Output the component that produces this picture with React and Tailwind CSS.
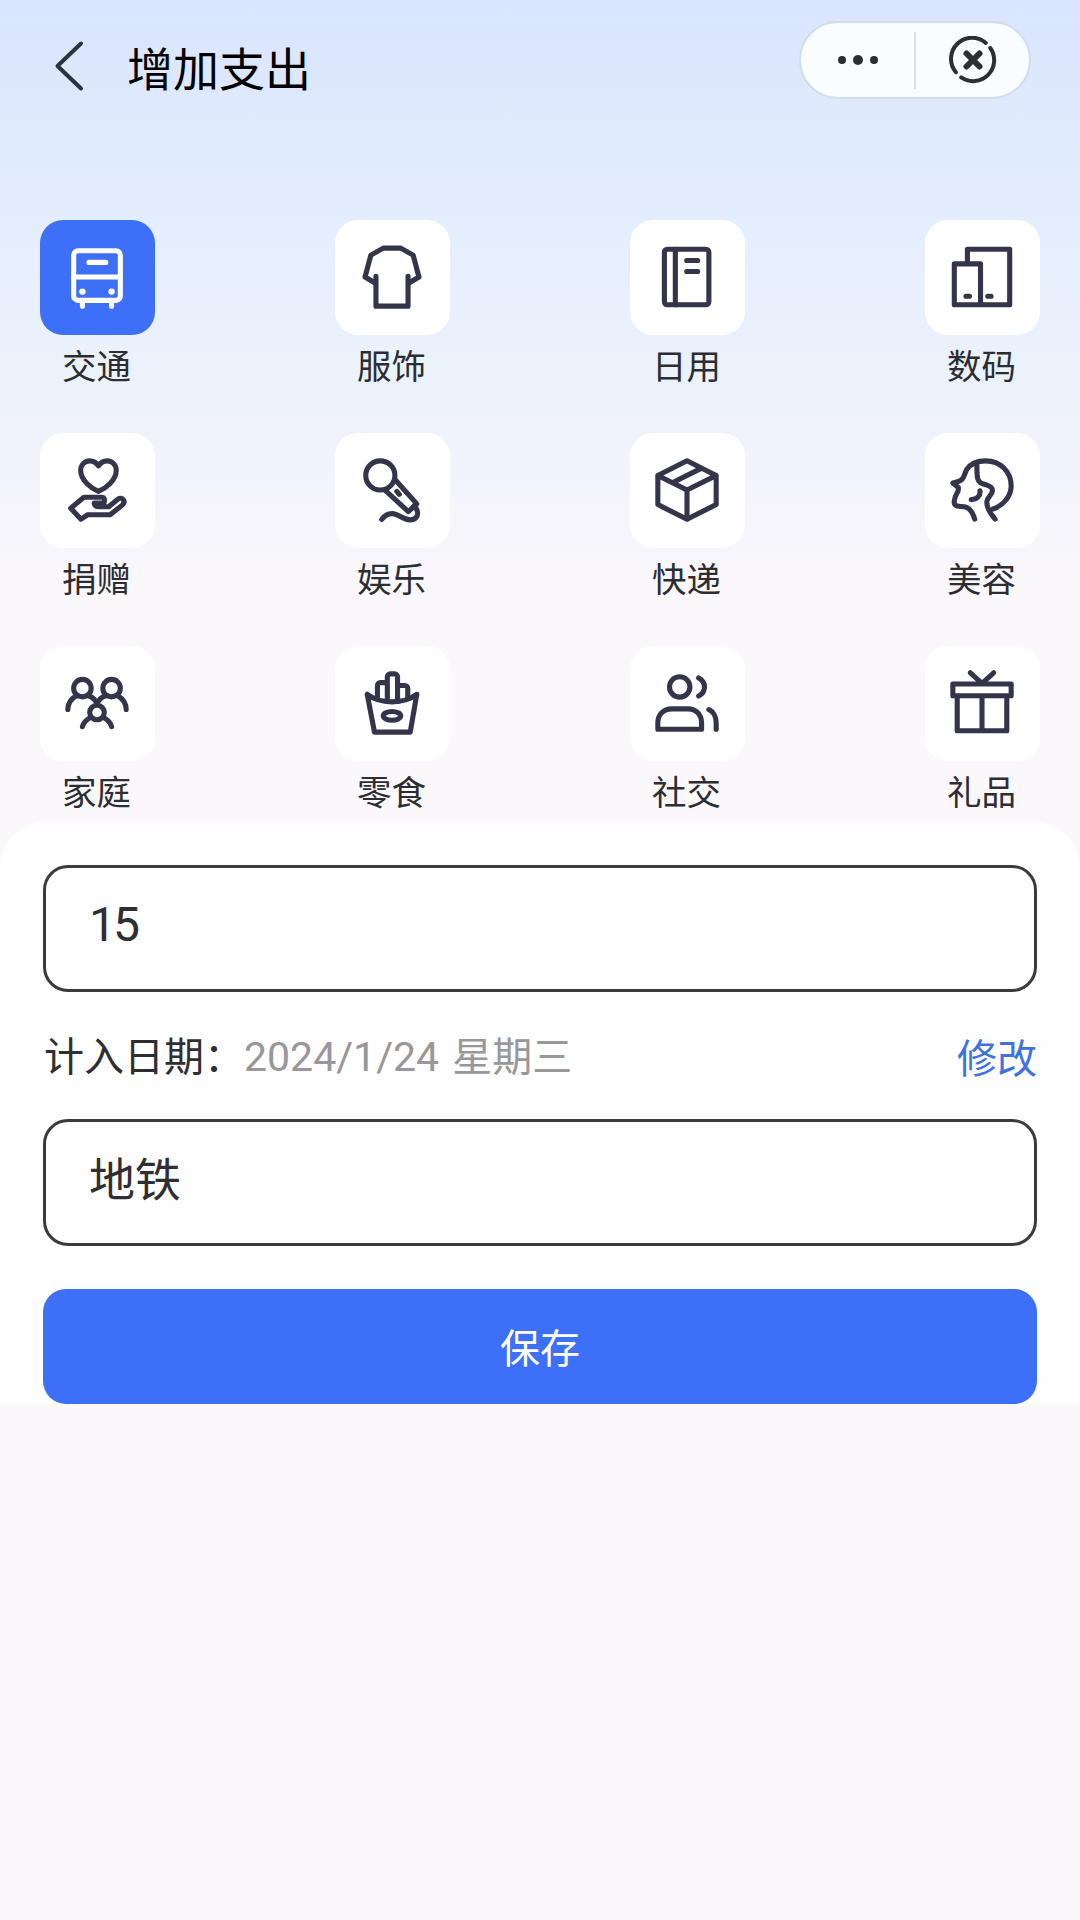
import React, { useState } from "react";
import clsx from "clsx";

const categories = [
  {
    name: "交通",
    icon: (
      <>
        <rect x="8" y="6" width="32" height="34" rx="3" />
        <path d="M8 24h32M18.500 14h11.500M14 40v4M34 40v4" />
        <circle cx="14" cy="34" r="2.200" fill="currentColor" stroke="none" />
        <circle cx="34" cy="34" r="2.200" fill="currentColor" stroke="none" />
      </>
    ),
  },
  {
    name: "服饰",
    icon: (
      <path d="M13 23.500V44h22V23.500M13 28.500 5.500 24 9.500 9 18 4.200h12L38.500 9l4 15-7.500 4.500" />
    ),
  },
  {
    name: "日用",
    icon: (
      <>
        <rect x="8.500" y="5" width="30.500" height="38" rx="2" />
        <path d="M16 5v38M23.800 12.700h7.500M23.800 20.200h7.500" />
      </>
    ),
  },
  {
    name: "数码",
    icon: (
      <path d="M14 15V5h29v38H23M5 15h18v28H5zM13 37.200h2.400M28 37.200h2.200" />
    ),
  },
  {
    name: "捐赠",
    icon: (
      <>
        <path d="M31 4c3.500 0 6.200 2.900 6.200 6.600C37.200 17.500 29.500 23.300 25 25c-4.500-1.700-12.200-7.500-12.200-14.400C12.800 6.900 15.500 4 19 4c2.500 0 4.700 1.400 6 3.500C26.300 5.400 28.500 4 31 4z" />
        <path d="M13 44 6 36.500 15 29h12.200c1.800 0 2.500 1.700 1.500 3.800L22 33c.3 1.500 1.700 2.500 3.500 2.500H32l6.500-5.300c1.200-.9 2.700-.7 3.500.4.900 1.200.7 2.500-.5 3.600L33 41H17.500L13 44z" />
      </>
    ),
  },
  {
    name: "娱乐",
    icon: (
      <>
        <circle cx="16" cy="14" r="10" />
        <path d="M26.200 17 41 33.500 35.200 38.800 18.800 23.800M27.300 25l1.700 2" />
        <path d="M17 44.200c2-3 4.200-4.200 7.500-4 4.500.3 6.500 4.300 12 4.300 3.500 0 5.500-2.500 5-5.300-.3-1.800-1-3.200-2.500-4.200" />
      </>
    ),
  },
  {
    name: "快递",
    icon: (
      <path d="M44 14 24 4 4 14v20l20 10 20-10V14zM4 14l20 10M24 44V24M44 14 24 24M34 9 14 19" />
    ),
  },
  {
    name: "美容",
    icon: (
      <>
        <path d="M19 44c-1-3.500-2.800-7-6-8.200-2-.8-4-.3-6-.8-1.500-.4-2.300-1.600-2-3.500.3-2 .7-3.500 1.800-5.200.8-1.200 1.200-2.200 1-4L4 19.200c3-.6 5-1 6.500-2.700 1.500-1.800 1.600-4 3-6.500C16 6 20.500 4 26.500 4 36.500 4 44 11.500 44 21c0 7-5 13.500-12.500 16" />
        <path d="M20.500 5.500c0 4-.2 7 .5 10.500.7 3.300 3 3.600 6 4.500 2.700.9 4.300 2 4.200 4-.2 3-3.700 4.500-3.900 7.500-.2 4.500 2.700 8.500 5.700 12M22.600 24.600c.4 3.400-2 5.900-6 6" />
      </>
    ),
  },
  {
    name: "家庭",
    icon: (
      <>
        <circle cx="14" cy="13.800" r="6" />
        <circle cx="34" cy="13.800" r="6" />
        <circle cx="24" cy="30.500" r="5" />
        <path d="M4 28.500c0-4 2-7.300 5.800-9.500M18 19c3 1 5 2.800 6 5.500 1-2.700 3-4.500 6-5.500M44 28.500c0-4-2-7.300-5.800-9.500M14 40.200c.8-2.700 2.700-4.700 5.500-6.200M34 40.200c-.8-2.700-2.700-4.700-5.500-6.200" />
      </>
    ),
  },
  {
    name: "零食",
    icon: (
      <>
        <path d="M7 18l5 26h24.500L41 18c-4.500 3.500-10.500 5.200-17 5.200S11.500 21.500 7 18z" />
        <path d="M14 20v-8a2 2 0 0 1 2-2h4.500M20.800 23V6a2 2 0 0 1 2-2h3a2 2 0 0 1 2 2v17M28 12h4.800a2 2 0 0 1 2 2v6.500" />
        <ellipse cx="24" cy="32.800" rx="6" ry="3" />
      </>
    ),
  },
  {
    name: "社交",
    icon: (
      <>
        <circle cx="19" cy="13" r="7" />
        <path d="M32 6.800c2.400 1.300 4 3.500 4 6.200s-1.600 4.900-4 6.200M39 28.500c3 1.300 5 5 5 9V42" />
        <path d="M4 42v-4.500C4 32 7.800 28 13.500 28h11.200c5.500 0 9.300 4 9.300 9.500V42H4z" />
      </>
    ),
  },
  {
    name: "礼品",
    icon: (
      <path d="M4 11h40v8H4zM7 19h34v24H7zM24 19v24M16 3.300l8 7.200 8-7.200" />
    ),
  },
];

function CategoryItem({ item, active, onClick }) {
  return (
    <button onClick={onClick} className="flex flex-col items-center cursor-pointer">
      <span
        className={clsx(
          "flex w-[115px] h-[115px] items-center justify-center rounded-[23px] pr-px pb-px",
          active ? "bg-[#3d6ff7] text-white" : "bg-white text-[#34354a]"
        )}
      >
        <svg
          viewBox="0 0 48 48"
          className="w-[70px] h-[70px]"
          fill="none"
          stroke="currentColor"
          strokeWidth="3.500"
          strokeLinecap="round"
          strokeLinejoin="round"
        >
          {item.icon}
        </svg>
      </span>
      <span className="mt-1 mb-0.5 pr-0.5 text-[34.500px] leading-[50px] text-[#2c2d33]">
        {item.name}
      </span>
    </button>
  );
}

function Header() {
  return (
    <header className="flex items-start justify-between pl-[54px] pr-[49px] pt-[21px]">
      <div className="flex items-center h-[89px] gap-[42px]">
        <svg
          viewBox="0 0 31 52"
          className="w-[31px] h-[52px]"
          fill="none"
          stroke="#2b333d"
          strokeWidth="4"
          strokeLinecap="round"
          strokeLinejoin="round"
        >
          <path d="M27 3.500 3.500 26 27 48.500" />
        </svg>
        <h1 className="text-[46px] leading-[60px] text-black">增加支出</h1>
      </div>

      <div className="flex items-center w-[232px] h-[78px] rounded-full bg-[#fafdff] border-2 border-[#d3dde9]">
        <div className="flex flex-1 items-center justify-center gap-[7px]">
          <span className="w-2 h-2 rounded-full bg-[#2b2e33]" />
          <span className="w-2.5 h-2.5 rounded-full bg-[#2b2e33]" />
          <span className="w-2 h-2 rounded-full bg-[#2b2e33]" />
        </div>
        <span className="w-0.5 h-[57px] bg-[#dcdfe4]" />
        <div className="flex flex-1 items-center justify-center">
          <svg
            viewBox="0 0 48 48"
            className="w-12 h-12"
            fill="none"
            stroke="#2b2e33"
            strokeLinecap="round"
          >
            <path
              d="M36.800 6.900A21 21 0 0 0 6.900 36.200M12.200 41.400A21 21 0 0 0 41.300 12"
              strokeWidth="4"
            />
            <path d="M17.500 17.500l13 13M30.500 17.500l-13 13" strokeWidth="6" />
          </svg>
        </div>
      </div>
    </header>
  );
}

export default function App() {
  const [selected, setSelected] = useState("交通");
  const [amount, setAmount] = useState("15");
  const [note, setNote] = useState("地铁");

  return (
    <div className="w-[1080px] min-h-[1920px] bg-[#faf8fb] font-['Noto_Sans_CJK_SC',sans-serif]">
      <div className="bg-[linear-gradient(180deg,#dae5ff_0px,#dfeafc_130px,#e5eefe_230px,#ebf2fb_370px,#f3f3fc_470px,#faf8fb_590px)]">
        <Header />

        <div className="grid grid-cols-[repeat(4,115px)] justify-between gap-y-[42px] px-10 pt-[110px]">
          {categories.map((item) => (
            <CategoryItem
              key={item.name}
              item={item}
              active={item.name === selected}
              onClick={() => setSelected(item.name)}
            />
          ))}
        </div>

        <div className="mt-[5px] rounded-t-[46px] bg-[#fefefe] px-[43px] pt-[43px]">
          <input
            value={amount}
            onChange={(e) => setAmount(e.target.value)}
            className="block w-full h-[127px] rounded-[25px] border-3 border-[#3b3a3d] px-[43px] pb-2 font-['Roboto','Noto_Sans_CJK_SC',sans-serif] text-[48px] tracking-[-3px] text-[#2f2e32] outline-none"
          />

          <div className="flex h-[127px] items-center justify-between text-[40px] leading-[60px]">
            <p className="flex items-baseline pl-px text-[#2f2e32]">
              <span>计入日期：</span>
              <span className="flex items-baseline gap-[13px] text-[#98979a]">
                <span className="font-['Roboto',sans-serif] text-[41px]">2024/1/24</span>
                <span>星期三</span>
              </span>
            </p>
            <button className="text-[#3f72e0] cursor-pointer">修改</button>
          </div>

          <input
            value={note}
            onChange={(e) => setNote(e.target.value)}
            className="block w-full h-[127px] rounded-[25px] border-3 border-[#3b3a3d] px-[43px] pb-3.5 text-[46px] text-[#2f2e32] outline-none"
          />

          <button className="mt-[43px] block w-full h-[115px] rounded-[23px] bg-[#3d6ff7] pb-0.5 text-[40px] text-white cursor-pointer">
            保存
          </button>
        </div>
      </div>
    </div>
  );
}
